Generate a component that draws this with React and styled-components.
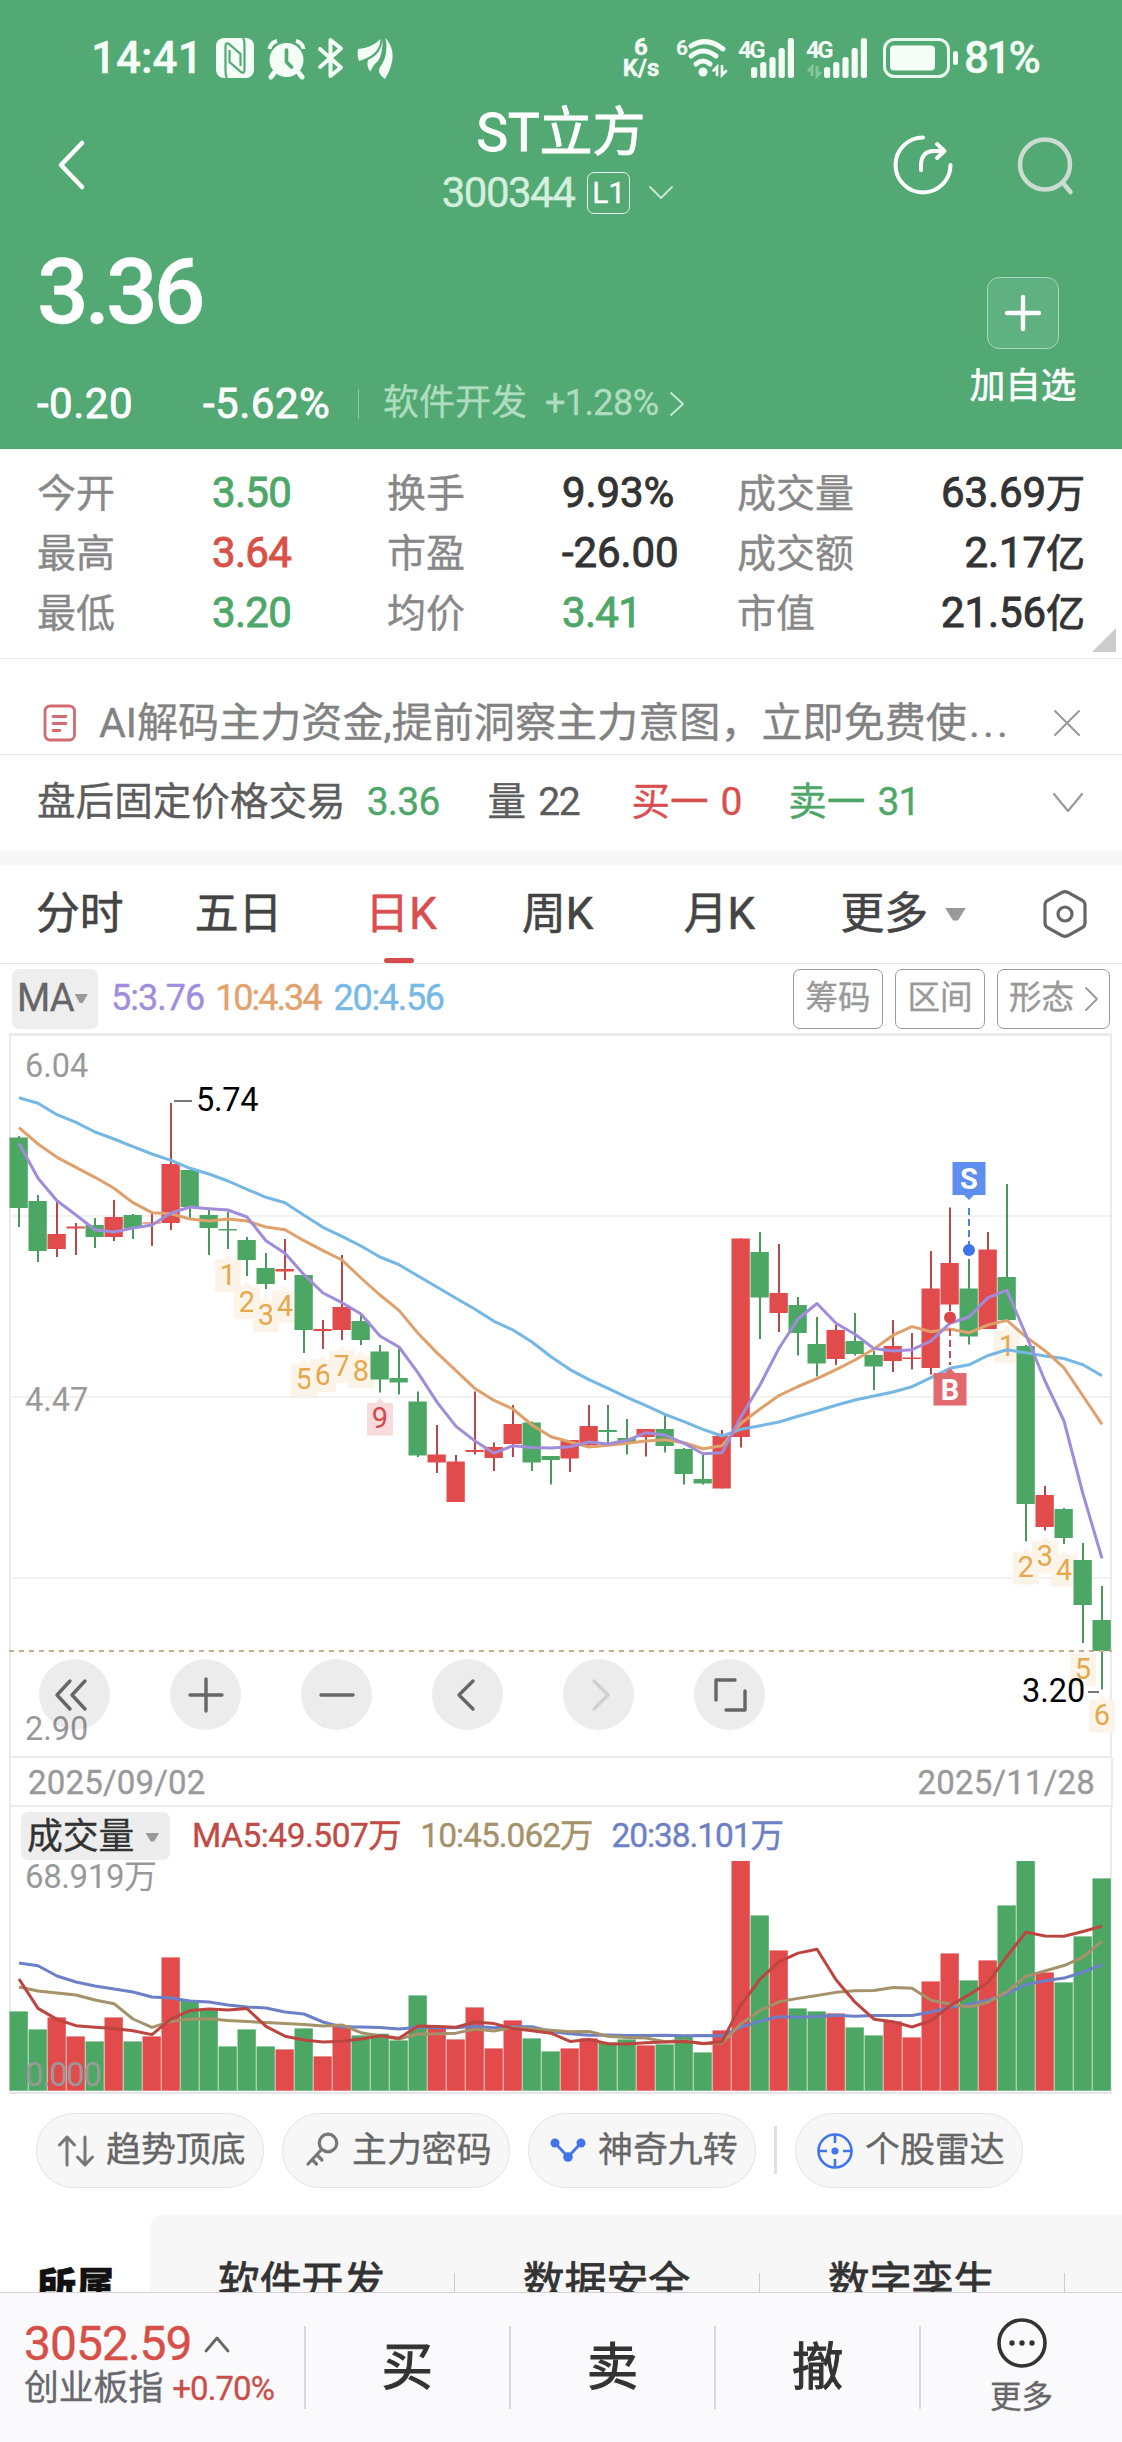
import React from 'react'
import styled, { createGlobalStyle } from 'styled-components'

const GREEN = '#4ca764'
const RED = '#e24b4b'
const STEP = 19

// [direction, body top, body bottom, high, low]
const candles = [
  ['g', 104.5, 175, 103, 194], ['g', 168, 218, 162, 229], ['r', 201, 216, 169, 224],
  ['r', 193.5, 195.5, 190, 222], ['g', 192, 204, 185, 215], ['r', 184, 204, 167, 208],
  ['g', 182, 195, 181, 206], ['r', 189.5, 190.5, 181, 213], ['r', 131, 190, 70, 197],
  ['g', 137, 174, 137, 185], ['g', 182, 195, 175, 222], ['g', 196, 197.5, 179, 216],
  ['g', 207, 227, 204, 243], ['g', 235, 251, 220, 256], ['r', 236, 238.5, 206, 247],
  ['g', 242, 297, 242, 320], ['r', 296, 298, 287, 316], ['r', 274, 297, 222, 307],
  ['g', 288, 307, 282, 312], ['g', 318.5, 346.5, 312, 359.5], ['g', 345, 349.5, 315, 361.5],
  ['g', 368.5, 422.5, 358.5, 424], ['r', 421.5, 429.5, 392, 440], ['r', 428.5, 469, 422, 469],
  ['r', 417, 419, 358.5, 421.5], ['r', 414, 425, 409.5, 438], ['r', 391, 411, 372, 424],
  ['g', 389.5, 429.5, 388.5, 438], ['g', 423, 427, 423, 451.5], ['r', 407, 425.5, 407, 439],
  ['r', 393, 412, 372, 413], ['g', 397, 399, 372, 410], ['g', 405, 410, 386, 421.5],
  ['r', 396, 404, 396, 423.5], ['g', 396, 413, 380, 419.5], ['g', 416, 441, 415, 451.5],
  ['g', 446, 450.5, 422, 451.5], ['r', 403, 455.5, 397, 455.5], ['r', 205.5, 404, 205.5, 414.5],
  ['g', 219, 264.5, 199, 306], ['r', 260, 280, 211, 299], ['g', 272, 300, 264, 322.5],
  ['g', 311, 330.5, 284, 343.5], ['r', 297, 326, 292, 332], ['g', 308, 321, 280, 322.5],
  ['g', 322, 333.5, 318, 357], ['r', 313, 328, 287, 339], ['r', 324.5, 326, 300, 336.5],
  ['r', 255.5, 335, 218, 341.5], ['r', 230, 271.5, 174.5, 278], ['g', 255.5, 303.5, 226, 311.5],
  ['r', 216.5, 296, 199, 296], ['g', 244, 287, 151, 287], ['g', 313, 471, 312, 508.5],
  ['r', 462, 494, 453, 497.5], ['g', 476, 505, 475, 511], ['g', 527, 572, 510, 610],
  ['g', 587, 618, 553, 656.5],
]

const ma20 = [
  64.7, 70.3, 81.7, 89.3, 99, 106, 113.7, 121, 127.3, 135.3, 141, 148, 156.3, 164.3, 169.7,
  182.3, 194.3, 203.3, 213, 224, 231.7, 243, 254, 265.3, 276.3, 288.3, 297, 309, 323.7, 336.6,
  346.6, 355.3, 364.3, 372.7, 381.3, 388.7, 396.3, 403, 396.3, 392.7, 389, 383.3, 378, 372.3,
  367, 363, 359, 353.7, 344.6, 335.3, 331.8, 322.5, 316.7, 319.8, 322.9, 325.6, 331.8, 342.8,
]
const ma10 = [
  94.7, 111, 124.3, 134.3, 144.3, 155.3, 169.7, 179.7, 180.7, 186, 188, 186, 188, 194, 196.7,
  207.7, 217.7, 227, 245, 262, 277.4, 300.2, 319.9, 337.7, 355.6, 367.4, 376, 392, 403.8, 409,
  414, 412.3, 410.3, 408, 406.7, 409.7, 415.7, 412.7, 390.3, 376, 362.6, 353.5, 345.6, 336.6,
  327, 316, 302.2, 293.6, 298.8, 296, 299.8, 291.9, 287.4, 303.9, 317.7, 334.9, 363, 391.3,
]
const ma5 = [
  110.3, 145.3, 167.7, 182, 196.7, 199, 195, 192, 180, 174, 175.7, 177, 184, 207.7, 220.3,
  241.7, 260, 269.7, 281, 303, 314, 339.9, 369.1, 393.4, 408.1, 420.2, 412.7, 414.5, 414.9, 413.7,
  409, 411, 407.3, 399.7, 402, 410.3, 420.7, 419.7, 383.7, 352, 315.3, 286, 270.5, 290.2,
  301.2, 315.6, 318, 316.7, 308, 290.2, 284, 264.7, 257.4, 302, 348, 388, 461, 525.3,
]

const volumes = [
  79.3, 61.3, 73.3, 54.3, 49.3, 73.3, 49.3, 54.3, 133.3, 90.3, 81.3, 44.3, 61.3, 44.3, 41.3,
  62.3, 34.3, 65.3, 55.3, 57, 50.3, 95.3, 63.3, 51.3, 83.3, 42.3, 70.3, 52.3, 39.3, 42.3,
  52.3, 48.3, 51.3, 45.3, 46.3, 54.3, 38.3, 60.3, 229.7, 175.3, 140.3, 82.3, 79.3, 77.3,
  63.3, 55.3, 69.3, 53.3, 109.3, 137.3, 110.3, 130.3, 185.3, 229.7, 118.3, 108.3, 154.3, 212.3,
]

// nine-turn counters: candle index -> number
const turns = [
  [11, 1], [12, 2], [13, 3], [14, 4], [15, 5], [16, 6], [17, 7], [18, 8], [19, 9],
  [52, 1], [53, 2], [54, 3], [55, 4], [56, 5], [57, 6],
]

const cx = i => 19 + STEP * i
const points = list => list.map((y, i) => `${cx(i)},${y}`).join(' ')

// the first averages need days that are off screen, so they come as a head
const average = (days, head) => volumes.map((_, i) => {
  if (i < head.length) return head[i]
  const part = volumes.slice(i - days + 1, i + 1)
  return part.reduce((a, b) => a + b, 0) / days
})
const VOL_BASE = 283.7
const volPoints = (days, head) => points(average(days, head).map(v => VOL_BASE - v))

const GlobalStyle = createGlobalStyle`
  * { box-sizing: border-box; }
  body {
    margin: 0;
    background: #fff;
    font-family: Roboto, "Noto Sans CJK SC", sans-serif;
    line-height: 1.2;
    color: #333;
    -webkit-text-stroke: 0.35px;
  }
  svg { display: block; flex: none; }
`

const Page = styled.div`
  width: 1122px;
  height: 2442px;
  overflow: hidden;
  display: flex;
  flex-direction: column;
`

const Num = styled.span`
  font-size: ${p => p.$size || 42}px;
  font-weight: ${p => p.$weight || 400};
  letter-spacing: ${p => p.$ls || 0}px;
  color: ${p => p.$color || 'inherit'};
  margin-left: ${p => p.$ml || 0}px;
  white-space: nowrap;
`

const Gap = styled.div`
  width: ${p => p.$w}px;
  flex: none;
`

/* header */

const Header = styled.header`
  height: 449px;
  flex: none;
  background: #53a974;
  color: #fff;
`

const StatusBar = styled.div`
  height: 100px;
  padding: 16px 84px 0 91px;
  display: flex;
  align-items: center;
  justify-content: space-between;
  color: #f4fdf6;
`

const StatusGroup = styled.div`
  display: flex;
  align-items: center;
`

const Speed = styled.div`
  width: 42px;
  margin-right: 14px;
  text-align: center;
  font-size: 24px;
  font-weight: 700;
  line-height: 21px;
`

const NavBar = styled.div`
  height: 130px;
  display: grid;
  grid-template-columns: 230px 1fr 230px;
`

const NavLeft = styled.div`
  display: flex;
  align-items: center;
  padding-left: 56px;
`

const NavRight = styled.div`
  display: flex;
  align-items: center;
  gap: 62px;
`

const Title = styled.h1`
  margin: 0;
  text-align: center;
  font-size: 53px;
  font-weight: 400;
  line-height: 66px;
  -webkit-text-stroke: 1px;
`

const CodeRow = styled.div`
  height: 54px;
  margin-left: -6px;
  display: flex;
  align-items: center;
  justify-content: center;
  color: #d3f0de;
`

const Level = styled.span`
  width: 43px;
  height: 42px;
  margin: 0 18px 0 13px;
  border: 1.5px solid #e3f5ea;
  border-radius: 7px;
  font-size: 30px;
  line-height: 40px;
  text-align: center;
  color: #fff;
`

const PriceArea = styled.div`
  height: 219px;
  display: flex;
  justify-content: space-between;
`

const PriceLeft = styled.div`
  padding: 12px 0 0 37px;
`

const Price = styled.div`
  height: 100px;
  line-height: 100px;
  font-size: 91px;
  font-weight: 500;
  letter-spacing: -4px;
`

const ChangeRow = styled.div`
  height: 50px;
  margin-top: 37px;
  display: flex;
  align-items: center;
`

const Change = styled.div`
  width: ${p => p.$w}px;
  font-size: 42px;
  letter-spacing: 0.5px;
  -webkit-text-stroke: 0.8px;
`

const Sector = styled.div`
  height: 30px;
  padding-left: 24px;
  border-left: 1px solid #8cc8a3;
  display: flex;
  align-items: center;
  font-size: 36px;
  color: #aedcbf;
`

const Watch = styled.div`
  width: 130px;
  margin-right: 34px;
  padding-top: 47px;
  display: flex;
  flex-direction: column;
  align-items: center;
  font-size: 35.5px;
  line-height: 40px;
  -webkit-text-stroke: 0.6px;
`

const WatchBox = styled.div`
  width: 72px;
  height: 72px;
  margin-bottom: 17px;
  border: 1.5px solid #a6d8b9;
  border-radius: 12px;
  background: #60b182;
  display: flex;
  align-items: center;
  justify-content: center;
`

/* quote table */

const Stats = styled.section`
  position: relative;
  height: 210px;
  flex: none;
  padding: 14px 37px 0;
  border-bottom: 1px solid #ebebeb;
  display: grid;
  grid-template-columns: 175px 175px 175px 175px 130px 1fr;
  grid-auto-rows: 60px;
  align-items: center;
`

const Label = styled.div`
  padding-top: 2px;
  font-size: 39px;
  color: #888;
`

const Value = styled.div`
  font-size: 42px;
  letter-spacing: ${p => (p.$color ? -0.7 : -0.1)}px;
  white-space: nowrap;
  color: ${p => p.$color || '#333'};
  text-align: ${p => (p.$end ? 'right' : 'left')};
  -webkit-text-stroke: 0.9px;
`

const Unit = styled.span`
  font-size: 39px;
`

const Corner = styled.div`
  position: absolute;
  right: 6px;
  bottom: 6px;
  width: 24px;
  height: 24px;
  background: #ccc;
  clip-path: polygon(100% 0, 100% 100%, 0 100%);
`

const Notice = styled.section`
  height: 96px;
  flex: none;
  padding: 32px 40px 0 43px;
  border-bottom: 1px solid #e4e4e4;
  display: flex;
  align-items: center;
  color: #828282;
`

const NoticeText = styled.div`
  flex: 1;
  padding-left: 22px;
  font-size: 41.1px;
  line-height: 60px;
  white-space: nowrap;
`

const Dots = styled.span`
  margin-left: 2px;
  letter-spacing: 3.2px;
`

const AfterHours = styled.section`
  height: 95px;
  flex: none;
  padding: 0 38px 0 37px;
  display: flex;
  align-items: center;
  font-size: 38.6px;
  color: #5c5c5c;
`

const AfterItem = styled.div`
  width: ${p => p.$w}px;
  white-space: nowrap;
  color: ${p => p.$color || 'inherit'};
`

const Band = styled.div`
  height: 15px;
  flex: none;
  background: #f7f7f7;
`

/* period tabs */

const Tabs = styled.nav`
  height: 99px;
  flex: none;
  padding: 0 34px 0 36px;
  border-bottom: 1px solid #e6e6e6;
  display: flex;
  align-items: center;
`

const Tab = styled.div`
  position: relative;
  width: ${p => p.$w}px;
  height: 98px;
  display: flex;
  align-items: center;
  gap: 17px;
  font-size: 43.8px;
  color: ${p => (p.$active ? '#d94e50' : '#444')};
  -webkit-text-stroke: 0.6px;

  &::after {
    content: '';
    display: ${p => (p.$active ? 'block' : 'none')};
    position: absolute;
    left: 19px;
    bottom: 0;
    width: 30px;
    height: 5px;
    border-radius: 3px;
    background: #d64c4e;
  }
`

const Triangle = styled.i`
  width: ${p => p.$w}px;
  height: ${p => p.$h}px;
  background: #999;
  clip-path: polygon(0 0, 100% 0, 62% 100%, 38% 100%);
`

const MaRow = styled.div`
  height: 69px;
  flex: none;
  padding: 0 12px;
  display: flex;
  align-items: center;
`

const MaPicker = styled.div`
  width: 86px;
  height: 60px;
  margin-right: 13px;
  padding-left: 5px;
  border-radius: 7px;
  background: #eee;
  display: flex;
  align-items: center;
  gap: 1px;
  font-size: 38px;
  letter-spacing: -0.8px;
  color: #666;
`

const MaTools = styled.div`
  margin-left: auto;
  display: flex;
  gap: 12px;
`

const Tool = styled.div`
  width: ${p => p.$w || 90}px;
  height: 60px;
  border: 1px solid #999;
  border-radius: 7px;
  display: flex;
  align-items: center;
  justify-content: center;
  gap: 11px;
  font-size: 32.5px;
  color: #999;
`

/* charts */

const KChart = styled.section`
  position: relative;
  height: 725px;
  flex: none;
`

const Controls = styled.div`
  position: absolute;
  left: 39px;
  top: 626px;
  display: flex;
  gap: 60px;
`

const Round = styled.div`
  width: 71px;
  height: 71px;
  border-radius: 50%;
  background: rgba(0, 0, 0, 0.075);
  display: flex;
  align-items: center;
  justify-content: center;
`

const DateRow = styled.div`
  height: 49px;
  flex: none;
  margin: 0 9px;
  padding: 2px 16px 0 17px;
  border: solid #ebebeb;
  border-width: 0 2px 2px;
  display: flex;
  align-items: center;
  justify-content: space-between;
  font-size: 33px;
  letter-spacing: 0.2px;
  color: #999;
`

const VolumeBox = styled.section`
  position: relative;
  height: 288px;
  flex: none;
`

const VolumeHead = styled.div`
  position: absolute;
  left: 21px;
  top: 5px;
  height: 48px;
  display: flex;
  align-items: center;
`

const VolumePicker = styled.div`
  width: 149px;
  height: 48px;
  margin-right: 22px;
  padding: 2px 0 0 6px;
  border-radius: 7px;
  background: #ededed;
  display: flex;
  align-items: center;
  gap: 11px;
  font-size: 35.8px;
  color: #333;
`

/* feature pills */

const Pills = styled.div`
  height: 120px;
  flex: none;
  padding: 18px 0 0 36px;
  display: flex;
  align-items: flex-start;
`

const Pill = styled.div`
  width: 228px;
  height: 75px;
  margin-right: ${p => p.$mr}px;
  padding: 1px 0 0 21px;
  border: 1px solid #e3e3e3;
  border-radius: 38px;
  background: #f7f7f7;
  display: flex;
  align-items: center;
  gap: 12px;
  font-size: 34.9px;
  white-space: nowrap;
  color: #666;
`

const PillLine = styled.div`
  width: 3px;
  height: 48px;
  margin: 13px 18px 0 0;
  background: #e0e0e0;
`

const Boards = styled.div`
  height: 77px;
  flex: none;
  overflow: hidden;
  display: flex;
`

const BoardsLabel = styled.div`
  width: 150px;
  flex: none;
  padding: 46px 0 0 37px;
  font-size: 39px;
  font-weight: 900;
  line-height: 52px;
  color: #111;
`

const BoardList = styled.div`
  flex: 1;
  display: flex;
  background: #f7f7f7;
  border-top-left-radius: 12px;
`

const Board = styled.div`
  position: relative;
  width: 305px;
  flex: none;
  padding: 38px 2px 0 0;
  text-align: center;
  font-size: 41.8px;
  line-height: 60px;
  -webkit-text-stroke: 0.8px;

  &::after {
    content: '';
    position: absolute;
    right: 0;
    top: 58px;
    width: 1px;
    height: 30px;
    background: #ccc;
  }
`

/* bottom bar */

const BottomBar = styled.footer`
  height: 150px;
  flex: none;
  border-top: 1px solid #d2d2d4;
  background: #fafafc;
  display: flex;
`

const Index = styled.div`
  width: 304px;
  padding: 26px 0 0 24px;
`

const IndexLine = styled.div`
  height: ${p => p.$h}px;
  display: flex;
  align-items: center;
  font-size: 34.8px;
  color: #68686e;
  white-space: nowrap;
`

const Action = styled.div`
  width: ${p => p.$w || 205.3}px;
  height: 83px;
  margin-top: 33px;
  border-left: 2px solid #d8d8da;
  display: flex;
  flex-direction: column;
  align-items: center;
  justify-content: center;
  font-size: 51.5px;
  color: #333;
  -webkit-text-stroke: 1px;
`

const MoreText = styled.span`
  margin-top: 9px;
  font-size: 31.5px;
  line-height: 40px;
  color: #666;
  -webkit-text-stroke: 0.3px;
`

const Line = ({ w, h, d, color = '#fff', sw = 3, cap = 'round' }) => (
  <svg width={w} height={h} viewBox={`0 0 ${w} ${h}`} fill="none" stroke={color} strokeWidth={sw} strokeLinecap={cap} strokeLinejoin="round">
    <path d={d} />
  </svg>
)

const StatusIcons = () => (
  <svg width="180" height="44" viewBox="0 0 180 44" fill="#f4fdf6">
    {/* nfc */}
    <rect x="0" y="2" width="38" height="40" rx="8" />
    <path d="M11 42Q9.500 40 9.500 36V10Q9.500 6 13 8L24.500 18V30" fill="none" stroke="#53a974" strokeWidth="2.200" />
    <path d="M27 2Q28.500 4 28.500 8V34Q28.500 38 25 36L13.500 26V14" fill="none" stroke="#53a974" strokeWidth="2.200" />
    {/* alarm */}
    <circle cx="70.500" cy="24" r="17" />
    <path d="M53.500 13A10 10 0 0 1 61 5M80 5A10 10 0 0 1 87.500 13" fill="none" stroke="#f4fdf6" strokeWidth="4" />
    <path d="M58 37l-3 4M83 37l3 4" stroke="#f4fdf6" strokeWidth="5" strokeLinecap="round" />
    <path d="M70.500 14v12l5 5" fill="none" stroke="#53a974" strokeWidth="3.600" strokeLinecap="round" />
    {/* bluetooth */}
    <path d="M104 13L125 31.500L114.500 40V4L125 12.500L104 31" fill="none" stroke="#f4fdf6" strokeWidth="4" strokeLinejoin="round" strokeLinecap="round" />
    {/* feather */}
    <path d="M142 13Q156 12 164.500 3Q164 19 143 25Q141 20 142 13Z" />
    <path d="M166.500 2Q167 18 162 25Q157 29 154.500 35.500Q150 31 152 24Q166 18 166.500 2Z" />
    <path d="M169.500 2Q184 18 169 43Q161.500 38 163.500 32Q173 20 169.500 2Z" />
  </svg>
)

const Wifi = () => (
  <svg width="53" height="44" viewBox="0 0 53 44" fill="none" stroke="#f4fdf6" strokeWidth="5" strokeLinecap="round">
    <text x="0" y="19" fontSize="21" fontWeight="700" fill="#f4fdf6" stroke="none">6</text>
    <path d="M15 10Q31 0 47 13" />
    <path d="M15 20Q27 10 40 20" />
    <path d="M20 28Q27 22 34 28" />
    <circle cx="27" cy="36" r="4.500" fill="#f4fdf6" stroke="none" />
    <path d="M41 39V31L37.500 34.500M46 30V39L50 35" strokeWidth="2.600" />
  </svg>
)

const Signal = ({ shift = 0 }) => (
  <svg width={57 + shift} height="44" viewBox={`0 0 ${57 + shift} 44`} fill="#f4fdf6">
    <text x="0" y="22" fontSize="24" fontWeight="700" letterSpacing="-2.500">4G</text>
    {shift > 0 && <path d="M6 40V31L2 35M11 30V40L15 36" fill="none" stroke="#86c49e" strokeWidth="3" />}
    {[11, 16, 21, 30, 40].map((h, i) => (
      <rect key={h} x={13 + shift + i * 9.2} y={42 - h} width="6.200" height={h} rx="2.500" />
    ))}
  </svg>
)

const Battery = () => (
  <svg width="76" height="44" viewBox="0 0 76 44">
    <rect x="1.500" y="3.500" width="64" height="37" rx="10" fill="none" stroke="#e9f8ee" strokeWidth="3" />
    <rect x="7" y="9.500" width="45" height="25" rx="4" fill="#f4fdf6" />
    <rect x="70" y="15" width="5" height="14" rx="2.500" fill="#f4fdf6" />
  </svg>
)

const Turn = ({ i, n }) => {
  const top = candles[i][4] + 10.5
  const x = cx(i)
  const last = n === 9
  return (
    <g>
      <rect x={x - 13} y={top} width="26" height="32.500" rx="1" fill={last ? '#f8dcdd' : '#fdf4e9'} />
      <path d={`M${x - 4} ${top}L${x} ${top - 5}L${x + 4} ${top}`} fill={last ? '#f8dcdd' : '#fdf4e9'} />
      <text x={x} y={top + 25} fontSize="29" textAnchor="middle" fill={last ? '#d04a4e' : '#e5a84b'}>{n}</text>
    </g>
  )
}

const CandleChart = () => (
  <svg width="1122" height="725" viewBox="0 0 1122 725">
    <g stroke="#f2f2f2" strokeWidth="2">
      <path d="M10 183H1111M10 364H1111M10 545H1111" />
    </g>
    <path d="M9 1.500H1112" stroke="#ebebeb" strokeWidth="3" />
    <path d="M10 1V725M1111 1V725M10 724H1111" stroke="#ebebeb" strokeWidth="2" />
    <g fontSize="32.500" fill="#999">
      <text x="25" y="44">6.04</text>
      <text x="25" y="378">4.47</text>
      <text x="25" y="707">2.90</text>
    </g>
    {turns.map(([i, n]) => <Turn key={i} i={i} n={n} />)}
    {candles.map(([dir, top, bottom, high, low], i) => (
      <g key={i} fill={dir === 'r' ? RED : GREEN}>
        <rect x={cx(i) - 1} y={high} width="2" height={low - high} fill={dir === 'r' ? '#b9474a' : '#4a9a5e'} />
        <rect x={cx(i) - 9.5} y={top} width="18.300" height={bottom - top} />
      </g>
    ))}
    <g fill="none" strokeWidth="3" strokeLinejoin="round">
      <polyline points={points(ma20)} stroke="#74b7e4" />
      <polyline points={points(ma10)} stroke="#e0a06c" />
      <polyline points={points(ma5)} stroke="#a08cd8" />
    </g>
    <path d="M9 618H1112" stroke="#c5ae8c" strokeWidth="2" strokeDasharray="5 5" />
    <g fontSize="32.500" fill="#000">
      <text x="196" y="78" letterSpacing="-0.300">5.74</text>
      <text x="1022" y="669">3.20</text>
    </g>
    <path d="M174 68H192M1088 659H1099" stroke="#777" strokeWidth="2" />
    {/* sell */}
    <path d="M952.500 129H985.500V162H974L969 167L964 162H952.500Z" fill="#5f8fee" />
    <path d="M969 175V212" stroke="#4f82e6" strokeWidth="2" strokeDasharray="7 4" />
    <circle cx="969" cy="217" r="6" fill="#3d74ea" />
    <text x="969" y="156" fontSize="29" fontWeight="700" fill="#fff" textAnchor="middle">S</text>
    {/* buy */}
    <path d="M933.500 340H945L950 335L955 340H966.500V372.500H933.500Z" fill="#e2696d" />
    <path d="M950 296V332" stroke="#c05058" strokeWidth="2" strokeDasharray="7 4" />
    <circle cx="950" cy="284.500" r="6" fill="#dd4648" />
    <text x="950" y="367" fontSize="29" fontWeight="700" fill="#fff" textAnchor="middle">B</text>
  </svg>
)

const VolumeChart = () => (
  <svg width="1122" height="288" viewBox="0 0 1122 288">
    <path d="M10 0V286M1111 0V286" stroke="#ebebeb" strokeWidth="2" />
    <path d="M9 286H1112" stroke="#e6e6e6" strokeWidth="2" />
    {volumes.map((v, i) => (
      <rect key={i} x={cx(i) - 9.5} y={VOL_BASE - v} width="18.300" height={v} fill={candles[i][0] === 'r' ? RED : GREEN} />
    ))}
    <g fontSize="33" fill="#999">
      <text x="25" y="81" letterSpacing="-0.400">68.919万</text>
      <text x="25" y="279" letterSpacing="-1.500">0.000</text>
    </g>
    <g fill="none" strokeWidth="3" strokeLinejoin="round">
      <polyline
        points={volPoints(20, [127.7, 125, 114.7, 108.7, 104.7, 101.7, 98.7, 93.7, 92.7, 89.7, 88.7, 85.7, 83.7, 82.7, 78.7, 76.7, 68.7, 63.7, 63.7])}
        stroke="#6c80c8"
      />
      <polyline points={volPoints(10, [103.7, 99.7, 97.7, 95.7, 90.7, 87, 71.7, 63.3, 69.3])} stroke="#a5916a" />
      <polyline points={volPoints(5, [111.7, 82.3, 71.3, 65])} stroke="#bd453f" />
    </g>
  </svg>
)

const stats = [
  ['今开', '3.50', '#4ea768', '换手', '9.93%', null, '成交量', '63.69', '万'],
  ['最高', '3.64', '#d75148', '市盈', '-26.00', null, '成交额', '2.17', '亿'],
  ['最低', '3.20', '#4ea768', '均价', '3.41', '#4ea768', '市值', '21.56', '亿'],
]

const controls = [
  { d: 'M17 4L4 18L17 32M32 4L19 18L32 32', w: 44 },
  { d: 'M18 2V34M2 18H34', w: 36 },
  { d: 'M2 18H34', w: 36 },
  { d: 'M23 4L9 18L23 32', w: 36 },
  { d: 'M13 4L27 18L13 32', w: 36, color: '#cfcfcf' },
  { d: 'M4 23V3H23M33 14V33H14', w: 36 },
]

const App = () => (
  <Page>
    <GlobalStyle />
    <Header>
      <StatusBar>
        <StatusGroup>
          <Num $size={44} $weight={500}>14:41</Num>
          <Gap $w={13} />
          <StatusIcons />
        </StatusGroup>
        <StatusGroup>
          <Speed>6<br />K/s</Speed>
          <Wifi />
          <Gap $w={9} />
          <Signal />
          <Gap $w={11} />
          <Signal shift={5} />
          <Gap $w={15} />
          <Battery />
          <Num $size={44} $weight={500} $ls={-2.8} $ml={5}>81%</Num>
        </StatusGroup>
      </StatusBar>
      <NavBar>
        <NavLeft>
          <Line w={30} h={52} d="M26 4L5 26L26 48" sw={4.5} />
        </NavLeft>
        <div>
          <Title>ST立方</Title>
          <CodeRow>
            <Num $ls={-1.5}>300344</Num>
            <Level>L1</Level>
            <Line w={26} h={16} d="M2 2L13 13L24 2" sw={1.8} color="#c9ead6" />
          </CodeRow>
        </div>
        <NavRight>
          <svg width="62" height="62" viewBox="0 0 62 62" fill="none" stroke="#fff" strokeWidth="4" strokeLinecap="round" strokeLinejoin="round">
            <path d="M31 3.500A27.500 27.500 0 1 0 58.500 31" />
            <path d="M29 36V30Q30 17 42 17H52M45 10L52.500 17L45 24" />
          </svg>
          <svg width="60" height="62" viewBox="0 0 60 62" fill="none" stroke="#cddcd3" strokeWidth="4.500" strokeLinecap="round">
            <circle cx="29" cy="30.500" r="25" />
            <path d="M47 49L54.500 58" />
          </svg>
        </NavRight>
      </NavBar>
      <PriceArea>
        <PriceLeft>
          <Price>3.36</Price>
          <ChangeRow>
            <Change $w={166}>-0.20</Change>
            <Change $w={155}>-5.62%</Change>
            <Sector>
              软件开发
              <Num $size={36} $ml={18} $ls={-0.6}>+1.28%</Num>
              <Gap $w={11} />
              <Line w={16} h={26} d="M2 2L14 13L2 24" sw={1.8} color="#c9ead6" />
            </Sector>
          </ChangeRow>
        </PriceLeft>
        <Watch>
          <WatchBox>
            <Line w={38} h={38} d="M19 3V35M3 19H35" sw={4.4} />
          </WatchBox>
          加自选
        </Watch>
      </PriceArea>
    </Header>

    <Stats>
      {stats.map(([l1, v1, c1, l2, v2, c2, l3, v3, unit]) => (
        <React.Fragment key={l1}>
          <Label>{l1}</Label>
          <Value $color={c1}>{v1}</Value>
          <Label>{l2}</Label>
          <Value $color={c2}>{v2}</Value>
          <Label>{l3}</Label>
          <Value $end>{v3}<Unit>{unit}</Unit></Value>
        </React.Fragment>
      ))}
      <Corner />
    </Stats>

    <Notice>
      <svg width="34" height="38" viewBox="0 0 34 38" fill="none" stroke="#d26b70" strokeWidth="2.800" strokeLinecap="round">
        <rect x="2" y="2" width="29.500" height="34" rx="5" />
        <path d="M10 12.500H23M10 19.500H23M10 26.500H17" />
      </svg>
      <NoticeText>AI解码主力资金,提前洞察主力意图，立即免费使<Dots>...</Dots></NoticeText>
      <Line w={30} h={30} d="M3 3L27 27M27 3L3 27" sw={2} color="#999" />
    </Notice>

    <AfterHours>
      <AfterItem $w={330}>盘后固定价格交易</AfterItem>
      <AfterItem $w={121} $color="#4ea768"><Num $size={39} $ls={-0.8}>3.36</Num></AfterItem>
      <AfterItem $w={144}>量<Num $size={39} $ls={-1.2} $ml={12}>22</Num></AfterItem>
      <AfterItem $w={157} $color="#d94f50">买一<Num $size={39} $ml={12}>0</Num></AfterItem>
      <AfterItem $w={264} $color="#4ea768">卖一<Num $size={39} $ml={12} $ls={-0.8}>31</Num></AfterItem>
      <Line w={32} h={22} d="M2 2L16 19L30 2" sw={2.2} color="#999" />
    </AfterHours>
    <Band />

    <Tabs>
      <Tab $w={159}>分时</Tab>
      <Tab $w={171}>五日</Tab>
      <Tab $w={157} $active>日K</Tab>
      <Tab $w={162}>周K</Tab>
      <Tab $w={157}>月K</Tab>
      <Tab $w={202}>更多<Triangle $w={21} $h={13} /></Tab>
      <svg width="46" height="50" viewBox="0 0 46 50" fill="none" stroke="#666" strokeWidth="3.200" strokeLinejoin="round">
        <path d="M20.500 3.200Q23 2 25.500 3.200L40.500 11.500Q43 13 43 16V34Q43 37 40.500 38.500L25.500 46.800Q23 48 20.500 46.800L5.500 38.500Q3 37 3 34V16Q3 13 5.500 11.500Z" />
        <circle cx="23" cy="25" r="7" />
      </svg>
    </Tabs>

    <MaRow>
      <MaPicker>MA<Triangle $w={13} $h={9} /></MaPicker>
      <Num $size={36} $color="#a08edc" $ls={-1}>5:3.76</Num>
      <Num $size={36} $color="#e3a16c" $ml={11} $ls={-2}>10:4.34</Num>
      <Num $size={36} $color="#76b9e6" $ml={13} $ls={-1.3}>20:4.56</Num>
      <MaTools>
        <Tool>筹码</Tool>
        <Tool>区间</Tool>
        <Tool $w={113}>形态<Line w={13} h={26} d="M1 2L12 13L1 24" sw={1.8} color="#999" /></Tool>
      </MaTools>
    </MaRow>

    <KChart>
      <CandleChart />
      <Controls>
        {controls.map(({ d, w, color }) => (
          <Round key={d}><Line w={w} h={36} d={d} sw={3.4} color={color || '#666'} /></Round>
        ))}
      </Controls>
    </KChart>
    <DateRow>
      <span>2025/09/02</span>
      <span>2025/11/28</span>
    </DateRow>
    <VolumeBox>
      <VolumeChart />
      <VolumeHead>
        <VolumePicker>成交量<Triangle $w={14} $h={9} /></VolumePicker>
        <Num $size={33.5} $color="#c04a44" $ls={-0.5}>MA5:49.507万</Num>
        <Num $size={33.5} $color="#a5916a" $ml={19} $ls={-1}>10:45.062万</Num>
        <Num $size={33.5} $color="#6c80c8" $ml={19} $ls={-1.1}>20:38.101万</Num>
      </VolumeHead>
    </VolumeBox>

    <Pills>
      <Pill $mr={18}>
        <svg width="36" height="34" viewBox="0 0 36 34" fill="none" stroke="#777" strokeWidth="3" strokeLinecap="round" strokeLinejoin="round">
          <path d="M9 31V3M1.500 11L9 3L16.500 11M27 3V31M19.500 23L27 31L34.500 23" />
        </svg>
        趋势顶底
      </Pill>
      <Pill $mr={18}>
        <svg width="36" height="38" viewBox="0 0 36 38" fill="none" stroke="#777" strokeWidth="3.200" strokeLinecap="round">
          <circle cx="24" cy="11" r="8.800" />
          <path d="M17.500 17.500L4 32M8.500 28L12.500 32M13 23L18 28" />
        </svg>
        主力密码
      </Pill>
      <Pill $mr={18}>
        <svg width="36" height="34" viewBox="0 0 36 34" fill="none" stroke="#4175ee" strokeWidth="2.800">
          <path d="M5 9L18 23L31 9" />
          <circle cx="5" cy="9" r="4.500" fill="#4175ee" stroke="none" />
          <circle cx="18" cy="23" r="4.800" fill="#4175ee" stroke="none" />
          <circle cx="31" cy="9" r="4.500" fill="#4175ee" stroke="none" />
        </svg>
        神奇九转
      </Pill>
      <PillLine />
      <Pill $mr={0}>
        <svg width="36" height="38" viewBox="0 0 36 38" fill="none" stroke="#4175ee" strokeWidth="2.600">
          <circle cx="18" cy="19" r="16.500" />
          <path d="M18 3V11M18 27V35M2 19H10M26 19H34" />
          <circle cx="18" cy="19" r="3.600" fill="#4175ee" stroke="none" />
        </svg>
        个股雷达
      </Pill>
    </Pills>

    <Boards>
      <BoardsLabel>所属</BoardsLabel>
      <BoardList>
        <Board>软件开发</Board>
        <Board>数据安全</Board>
        <Board>数字孪生</Board>
      </BoardList>
    </Boards>

    <BottomBar>
      <Index>
        <IndexLine $h={50}>
          <Num $size={48} $ls={-1} $color="#d65047">3052.59</Num>
          <Gap $w={12} />
          <Line w={26} h={18} d="M2 16L13 3L24 16" sw={2.8} color="#666" />
        </IndexLine>
        <IndexLine $h={40}>
          创业板指
          <Num $size={33} $ml={9} $ls={-0.9} $color="#c9504a">+0.70%</Num>
        </IndexLine>
      </Index>
      <Action>买</Action>
      <Action>卖</Action>
      <Action>撤</Action>
      <Action $w={203}>
        <svg width="50" height="52" viewBox="0 0 50 52" fill="none" stroke="#333" strokeWidth="3.600">
          <circle cx="25" cy="26" r="23" />
          <g fill="#333" stroke="none">
            <circle cx="15" cy="26" r="2.700" />
            <circle cx="25" cy="26" r="2.700" />
            <circle cx="35" cy="26" r="2.700" />
          </g>
        </svg>
        <MoreText>更多</MoreText>
      </Action>
    </BottomBar>
  </Page>
)

export default App
